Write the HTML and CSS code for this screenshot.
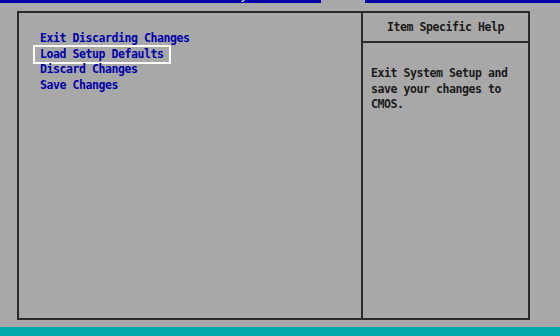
FILE: index.html
```html
<!DOCTYPE html>
<html lang="en">
<head>
  <meta charset="UTF-8">
  <meta name="viewport" content="width=device-width, initial-scale=1.0">
  <title>BIOS Setup Utility - Exit</title>
  <link rel="stylesheet" href="styles.css">
</head>
<body>
  <div class="menubar">
    <span class="tab tab-main">Main</span>
    <span class="tab tab-advanced">Advanced</span>
    <span class="tab tab-security">Security</span>
    <span class="tab tab-boot">Boot</span>
    <span class="tab tab-exit active">Exit</span>
  </div>

  <div class="frame">
    <div class="options">
      <span class="option">Exit Discarding Changes</span>
      <span class="option selected">Load Setup Defaults</span>
      <span class="option">Discard Changes</span>
      <span class="option">Save Changes</span>
    </div>
    <div class="help">
      <div class="help-title">Item Specific Help</div>
      <div class="help-text">Exit System Setup and<br>save your changes to<br>CMOS.</div>
    </div>
  </div>

  <div class="statusbar"></div>
</body>
</html>
```
FILE: styles.css
```css
body {
  margin: 0;
  height: 336px;
  overflow: hidden;
  background: #a8a8a8;
  font-family: "DejaVu Sans Mono", "Liberation Mono", monospace;
  font-size: 11.5px;
  letter-spacing: -0.42px;
  font-weight: bold;
  line-height: 15.5px;
}
.menubar {
  height: 16px;
  margin-top: -13px;
  background: #0000a8;
  color: #c8c8c8;
  display: flex;
  line-height: 16px;
}
.tab {
  padding: 0 6px;
}
.tab-main { margin-left: 34px; }
.tab-advanced { margin-left: 33px; }
.tab-security { margin-left: 20px; }
.tab-boot { margin-left: 20px; }
.tab-exit { margin-left: 10px; padding: 0 9px; }
.tab.active {
  background: #a8a8a8;
  color: #0000a8;
}
.frame {
  box-sizing: border-box;
  width: 513px;
  height: 309px;
  margin: 8px 0 0 17px;
  border: 2px solid #2a2a2a;
  display: grid;
  grid-template-columns: 342px 1fr;
}
.options {
  padding: 18px 0 0 21px;
  display: flex;
  flex-direction: column;
  align-items: flex-start;
  color: #0000a8;
}
.option {
  padding: 0 5px;
  margin-left: -5px;
}
.option.selected {
  outline: 2px solid #fff;
}
.help {
  border-left: 2px solid #2a2a2a;
  color: #1a1a1a;
}
.help-title {
  height: 28px;
  line-height: 28px;
  text-align: center;
  border-bottom: 2px solid #2a2a2a;
}
.help-text {
  padding: 23px 0 0 8px;
}
.statusbar {
  height: 9px;
  margin-top: 7px;
  background: #00aaaa;
}
```
